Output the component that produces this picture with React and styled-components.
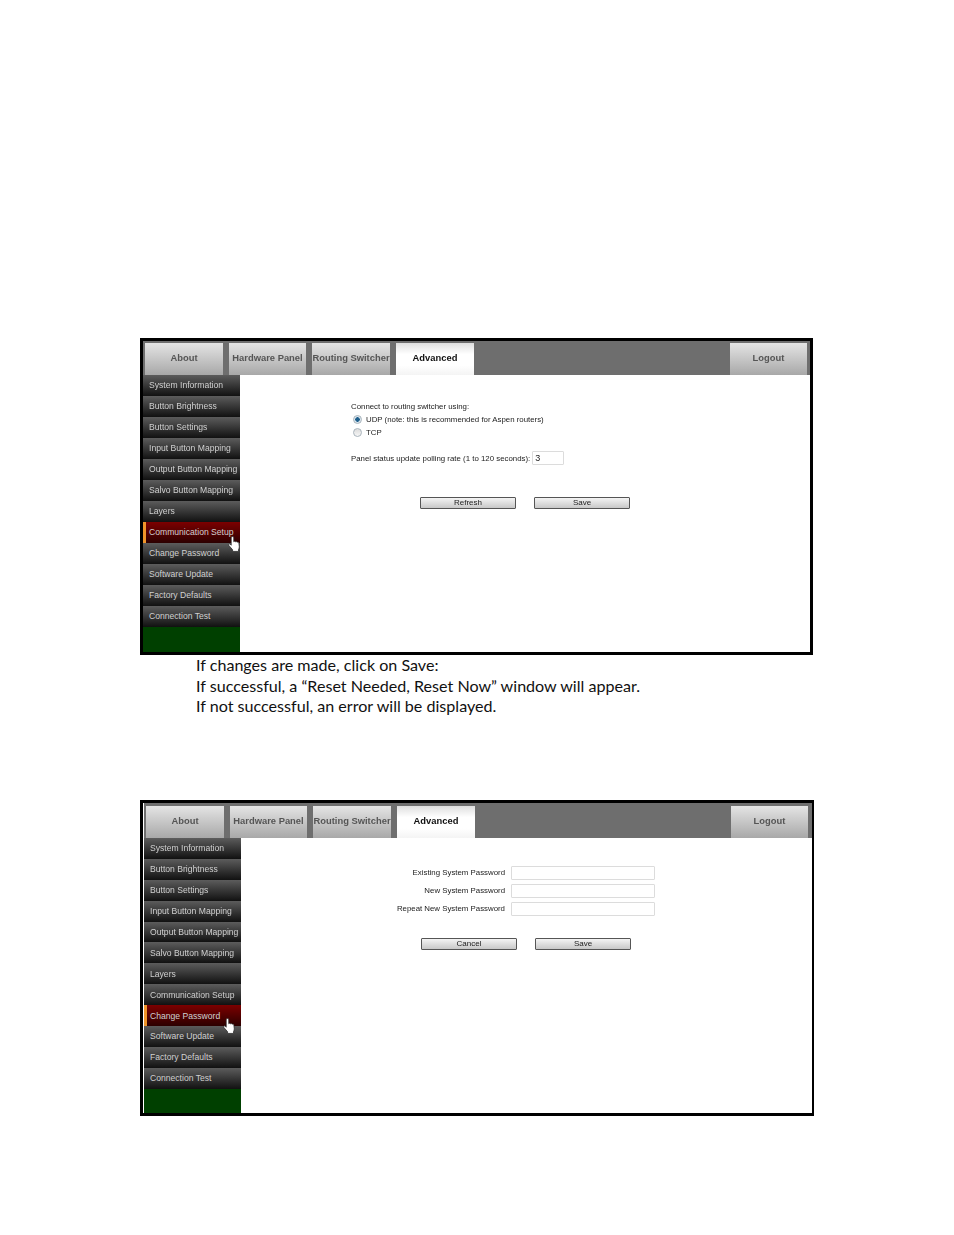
import React from 'react';
import styled, { createGlobalStyle } from 'styled-components';

const GlobalStyle = createGlobalStyle`
    html, body {
        margin: 0;
        padding: 0;
        background: #fff;
    }
    #root {
        width: 954px;
        height: 1235px;
        overflow: hidden;
    }
`;

const menuItems = [
    'System Information',
    'Button Brightness',
    'Button Settings',
    'Input Button Mapping',
    'Output Button Mapping',
    'Salvo Button Mapping',
    'Layers',
    'Communication Setup',
    'Change Password',
    'Software Update',
    'Factory Defaults',
    'Connection Test',
];

function HandCursor() {
    return (
        <svg width="13" height="17" viewBox="0 0 12 16">
            <path
                d="M2.9 1.6c0-1.4 2.4-1.4 2.4 0v3.8c.4-.6 1.5-.5 1.7.2.4-.5 1.4-.4 1.6.3.4-.4 1.4-.3 1.5.5l.4 3.8c.1 1-.3 1.7-.7 2.4v1.9H4.2v-1.6L.7 8.9c-.6-1 .5-2 1.3-1.2l.9 1z"
                fill="#fff"
                stroke="#222"
                strokeWidth="0.7"
                strokeLinejoin="round"
            />
        </svg>
    );
}

function Panel({ active, cursor, second, children }) {
    return (
        <Frame $second={second}>
            <TabBar $second={second}>
                <Tab $width={78} $gap={6} $second={second}>About</Tab>
                <Tab $width={77} $gap={6} $second={second}>Hardware Panel</Tab>
                <Tab $width={78} $gap={6} $second={second}>Routing Switcher</Tab>
                <Tab $width={78} $second={second} $active>Advanced</Tab>
                <Tab $width={77} $second={second} $push>Logout</Tab>
            </TabBar>
            <Body>
                <Sidebar>
                    {menuItems.map((item) => (
                        <MenuItem key={item} $active={item === active} $second={second}>
                            {item}
                            {item === active && (
                                <Cursor $left={cursor.left} $top={cursor.top}>
                                    <HandCursor />
                                </Cursor>
                            )}
                        </MenuItem>
                    ))}
                    <SideFill />
                </Sidebar>
                <Content>{children}</Content>
            </Body>
        </Frame>
    );
}

export default function App() {
    return (
        <>
            <GlobalStyle />
            <Page>
                <Panel active="Communication Setup" cursor={{ left: 82, top: 14 }}>
                    <ConnectForm>
                        <FormLine>Connect to routing switcher using:</FormLine>
                        <RadioLine>
                            <Radio $checked />
                            UDP (note: this is recommended for Aspen routers)
                        </RadioLine>
                        <RadioLine>
                            <Radio />
                            TCP
                        </RadioLine>
                        <PollLine>
                            Panel status update polling rate (1 to 120 seconds):
                            <PollInput>3</PollInput>
                        </PollLine>
                    </ConnectForm>
                    <ButtonRow $top={32} $left={180}>
                        <FormButton>Refresh</FormButton>
                        <FormButton>Save</FormButton>
                    </ButtonRow>
                </Panel>
                <Notes>
                    <p>If changes are made, click on Save:</p>
                    <p>If successful, a “Reset Needed, Reset Now” window will appear.</p>
                    <p>If not successful, an error will be displayed.</p>
                </Notes>
                <Panel active="Change Password" cursor={{ left: 76, top: 13 }} second>
                    <PasswordForm>
                        <PasswordLabel>Existing System Password</PasswordLabel>
                        <PasswordInput />
                        <PasswordLabel>New System Password</PasswordLabel>
                        <PasswordInput />
                        <PasswordLabel>Repeat New System Password</PasswordLabel>
                        <PasswordInput />
                    </PasswordForm>
                    <ButtonRow $top={22} $left={180}>
                        <FormButton>Cancel</FormButton>
                        <FormButton>Save</FormButton>
                    </ButtonRow>
                </Panel>
            </Page>
        </>
    );
}

const Page = styled.div`
    padding: 338px 0 0 140px;
`;

const Frame = styled.div`
    box-sizing: border-box;
    width: ${(p) => (p.$second ? '674px' : '673px')};
    height: ${(p) => (p.$second ? '316px' : '317px')};
    border: 3px solid #000;
    border-width: 3px ${(p) => (p.$second ? '2px' : '3px')} 3px 3px;
    display: flex;
    flex-direction: column;
    font-family: 'Liberation Sans', Arial, sans-serif;
    filter: blur(0.4px);
    padding-left: ${(p) => (p.$second ? '1px' : '0')};
`;

const TabBar = styled.div`
    flex: none;
    height: ${(p) => (p.$second ? '35px' : '34px')};
    background: #6e6e6e;
    display: flex;
    align-items: flex-end;
    padding-left: 2px;
`;

const Tab = styled.div`
    box-sizing: border-box;
    flex: none;
    width: ${(p) => p.$width}px;
    height: 32px;
    padding-bottom: ${(p) => (p.$second ? '4px' : '3px')};
    margin-left: ${(p) => (p.$push ? 'auto' : '0')};
    margin-right: ${(p) => (p.$push ? (p.$second ? '4px' : '3px') : `${p.$gap || 0}px`)};
    display: flex;
    align-items: center;
    justify-content: center;
    white-space: nowrap;
    font-size: 9.4px;
    font-weight: 700;
    color: ${(p) => (p.$active ? '#111' : '#555')};
    background: ${(p) =>
        p.$active
            ? 'linear-gradient(#dedede, #ffffff 35%, #ffffff 70%, #f4f4f4)'
            : 'linear-gradient(#e4e4e4, #cfcfcf 35%, #a8a8a8)'};
`;

const Body = styled.div`
    flex: 1;
    min-height: 0;
    display: flex;
`;

const Sidebar = styled.div`
    flex: none;
    width: 97px;
    display: flex;
    flex-direction: column;
`;

const MenuItem = styled.div`
    box-sizing: border-box;
    position: relative;
    flex: none;
    height: ${(p) => (p.$second ? '20.9px' : '21px')};
    padding-left: ${(p) => (p.$active ? '3px' : '6px')};
    padding-bottom: ${(p) => (p.$second ? '0' : '1px')};
    border-left: ${(p) => (p.$active ? '3px solid #f0952a' : 'none')};
    display: flex;
    align-items: center;
    white-space: nowrap;
    font-size: 8.6px;
    color: #d0d0d0;
    background: ${(p) =>
        p.$active
            ? 'linear-gradient(#7c0000, #2c0000)'
            : 'linear-gradient(#5c5c5c, #111111)'};
`;

const Cursor = styled.span`
    position: absolute;
    left: ${(p) => p.$left}px;
    top: ${(p) => p.$top}px;
    line-height: 0;
    z-index: 1;
`;

const SideFill = styled.div`
    flex: 1;
    background: #004000;
`;

const Content = styled.div`
    flex: 1;
    min-width: 0;
    background: #fff;
    font-size: 7.85px;
    color: #222;
`;

const ConnectForm = styled.div`
    padding: 26px 0 0 111px;
`;

const FormLine = styled.div`
    height: 12px;
    line-height: 12px;
`;

const RadioLine = styled.div`
    height: 13px;
    display: flex;
    align-items: center;
    gap: 4px;
    padding-left: 2px;
`;

const Radio = styled.span`
    box-sizing: border-box;
    flex: none;
    width: 9px;
    height: 9px;
    border-radius: 50%;
    border: 1px solid #a9b4bc;
    background: ${(p) =>
        p.$checked
            ? 'radial-gradient(circle, #1f5f8c 0 2px, #dbe7ef 2.5px)'
            : 'linear-gradient(#dcdcdc, #f6f6f6)'};
`;

const PollLine = styled.div`
    margin-top: 12px;
    display: flex;
    align-items: center;
    gap: 2px;
`;

const PollInput = styled.div`
    box-sizing: border-box;
    width: 32px;
    height: 14px;
    border: 1px solid #dcdcdc;
    border-radius: 1px;
    padding-left: 2px;
    font-size: 9px;
    line-height: 12px;
`;

const ButtonRow = styled.div`
    margin: ${(p) => p.$top}px 0 0 ${(p) => p.$left}px;
    display: flex;
    gap: 18px;
`;

const FormButton = styled.div`
    box-sizing: border-box;
    width: 96px;
    height: 12px;
    padding-bottom: 1px;
    border: 1px solid #555;
    border-radius: 1px;
    display: flex;
    align-items: center;
    justify-content: center;
    font-size: 8px;
    color: #222;
    background: linear-gradient(#f4f4f4, #c8c8c8);
`;

const PasswordForm = styled.div`
    display: grid;
    grid-template-columns: 264px 144px;
    column-gap: 6px;
    row-gap: 4px;
    align-items: center;
    padding-top: 28px;
`;

const PasswordLabel = styled.div`
    text-align: right;
    white-space: nowrap;
    padding-bottom: 1px;
`;

const PasswordInput = styled.div`
    box-sizing: border-box;
    height: 14px;
    border: 1px solid #dcdcdc;
    border-radius: 1px;
`;

const Notes = styled.div`
    height: 145px;
    padding-left: 56px;
    font-family: Lato, 'Open Sans', sans-serif;
    font-size: 16.1px;
    line-height: 20.5px;
    color: #111;
    p {
        margin: 0;
    }
`;
